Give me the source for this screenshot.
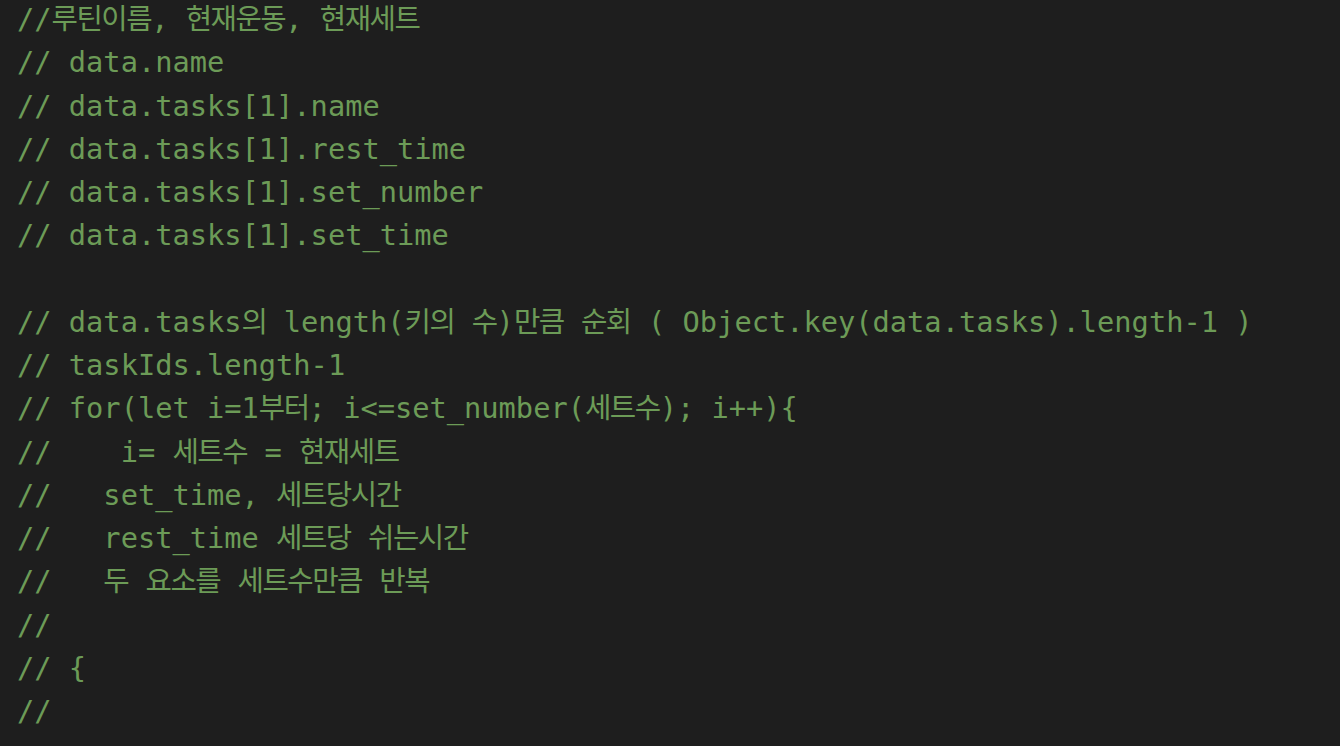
const lines = [
  "//루틴이름, 현재운동, 현재세트",
  "// data.name",
  "// data.tasks[1].name",
  "// data.tasks[1].rest_time",
  "// data.tasks[1].set_number",
  "// data.tasks[1].set_time",
  "",
  "// data.tasks의 length(키의 수)만큼 순회 ( Object.key(data.tasks).length-1 )",
  "// taskIds.length-1",
  "// for(let i=1부터; i<=set_number(세트수); i++){",
  "//    i= 세트수 = 현재세트",
  "//   set_time, 세트당시간",
  "//   rest_time 세트당 쉬는시간",
  "//   두 요소를 세트수만큼 반복",
  "//",
  "// {",
  "//",
];

// hangul in the reference is narrower than a full em, so tighten those runs
function Line({ text }) {
  const parts = text.split(/([\u3131-\uD7A3]+)/);
  return (
    <div className="h-[43.25px] leading-[43.25px] whitespace-pre">
      {parts.map((p, i) =>
        /[\u3131-\uD7A3]/.test(p) ? (
          <span key={i} className="tracking-[-1.5px]">
            {p}
          </span>
        ) : (
          <span key={i}>{p}</span>
        )
      )}
      {text === "" ? " " : null}
    </div>
  );
}

export default function App() {
  return (
    <div className="h-[746px] w-[1340px] overflow-hidden bg-[#1e1e1e]">
      <div className="-mt-[2px] pl-[17px] font-['DejaVu_Sans_Mono','Noto_Sans_CJK_KR',monospace] text-[28.7px] text-[#6c9b57]">
        {lines.map((l, i) => (
          <Line key={i} text={l} />
        ))}
      </div>
    </div>
  );
}
